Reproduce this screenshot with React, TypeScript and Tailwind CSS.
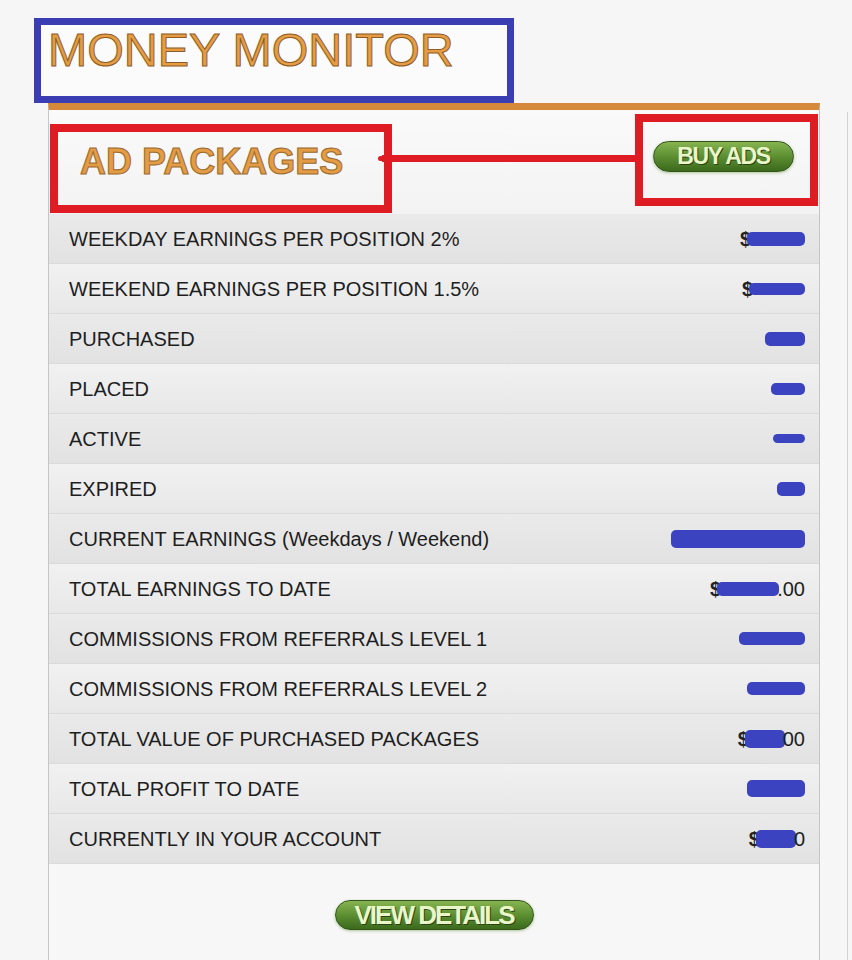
const rows = [
  { label: 'WEEKDAY EARNINGS PER POSITION 2%', pre: '$', blob: 58, h: 14 },
  { label: 'WEEKEND EARNINGS PER POSITION 1.5%', pre: '$', blob: 56, h: 12 },
  { label: 'PURCHASED', blob: 40, h: 14 },
  { label: 'PLACED', blob: 34, h: 12 },
  { label: 'ACTIVE', blob: 32, h: 9 },
  { label: 'EXPIRED', blob: 28, h: 14 },
  { label: 'CURRENT EARNINGS (Weekdays / Weekend)', blob: 134, h: 18 },
  { label: 'TOTAL EARNINGS TO DATE', pre: '$', blob: 62, h: 14, post: '.00' },
  { label: 'COMMISSIONS FROM REFERRALS LEVEL 1', blob: 66, h: 13 },
  { label: 'COMMISSIONS FROM REFERRALS LEVEL 2', blob: 58, h: 13 },
  { label: 'TOTAL VALUE OF PURCHASED PACKAGES', pre: '$', blob: 40, h: 18, post: '00' },
  { label: 'TOTAL PROFIT TO DATE', blob: 58, h: 17 },
  { label: 'CURRENTLY IN YOUR ACCOUNT', pre: '$', blob: 40, h: 18, post: '0' },
];

function GreenButton({ children, className }: { children: string; className: string }) {
  return (
    <div
      className={`flex items-center justify-center rounded-full border border-[#34521c] bg-gradient-to-b from-[#86b450] via-[#5d8f32] to-[#3b6a1c] font-bold text-[#e9f6c9] shadow-[0_1px_3px_rgba(80,140,40,0.45)] [text-shadow:1px_1px_0_#2c4414] ${className}`}
    >
      {children}
    </div>
  );
}

export default function App() {
  return (
    <div className="relative h-[960px] w-[852px] overflow-hidden bg-[#f6f6f6] font-['Liberation_Sans',Arial,sans-serif]">
      {/* next panel edge on the right */}
      <div className="absolute bottom-0 left-[847px] top-[112px] w-px bg-[#d2d2d2]" />

      <div className="ml-[34px] mt-[18px] flex h-[85px] w-[480px] items-start border-[7px] border-[#3b3db2] bg-[#fbfbfb] pl-[7px] pt-[1px]">
        <h1 className="text-[47px] leading-[47px] text-[#e59c42] [-webkit-text-stroke:1px_#8e5c26]">MONEY MONITOR</h1>
      </div>

      <div className="ml-[48px] w-[772px] border-x border-t-[7px] border-x-[#c6c6c6] border-t-[#d6893b] bg-white">
        <div className="relative flex h-[104px] items-start justify-between bg-gradient-to-b from-[#fafafa] to-[#f3f3f3]">
          <h2 className="ml-[31px] mt-[34px] text-[36px] font-bold leading-[36px] text-[#e39b44] [-webkit-text-stroke:1px_#9a6a30]">
            AD PACKAGES
          </h2>
          <GreenButton className="mr-[25px] mt-[31px] h-[31px] w-[141px] text-[23px] tracking-[-1.4px]">BUY ADS</GreenButton>

          <div className="absolute left-[1px] top-[14px] h-[89px] w-[342px] border-[8px] border-[#df1b24]" />
          <div className="absolute left-[586px] top-[4px] h-[92px] w-[183px] border-[8px] border-[#df1b24]" />
          <div className="absolute left-[333px] top-[45px] h-[7px] w-[255px] bg-[#df1b24]" />
          <div className="absolute left-[329px] top-[46px] h-[5px] w-[6px] rounded-full bg-[#df1b24]" />
        </div>

        <div>
          {rows.map((r, i) => (
            <div
              key={r.label}
              className={`flex h-[50px] items-center justify-between border-b border-[#dadada] pl-[20px] pr-[14px] text-[20px] text-[#1e1e1e] ${
                i % 2 === 0 ? 'bg-gradient-to-b from-[#eaeaea] to-[#e2e2e2]' : 'bg-gradient-to-b from-[#f1f1f1] to-[#e8e8e8]'
              }`}
            >
              <span>{r.label}</span>
              <span className="flex items-center">
                {r.pre && <span className="-mr-[4px] text-[20px] font-bold text-[#222]">{r.pre}</span>}
                <span className="rounded-[5px] bg-[#3b43c0]" style={{ width: r.blob, height: r.h }} />
                {r.post && <span className="-ml-[2px]">{r.post}</span>}
              </span>
            </div>
          ))}
        </div>

        <div className="flex h-[100px] justify-center bg-[#f7f7f7] pt-[36px]">
          <GreenButton className="h-[30px] w-[199px] text-[26px] tracking-[-2px]">VIEW DETAILS</GreenButton>
        </div>
      </div>
    </div>
  );
}
